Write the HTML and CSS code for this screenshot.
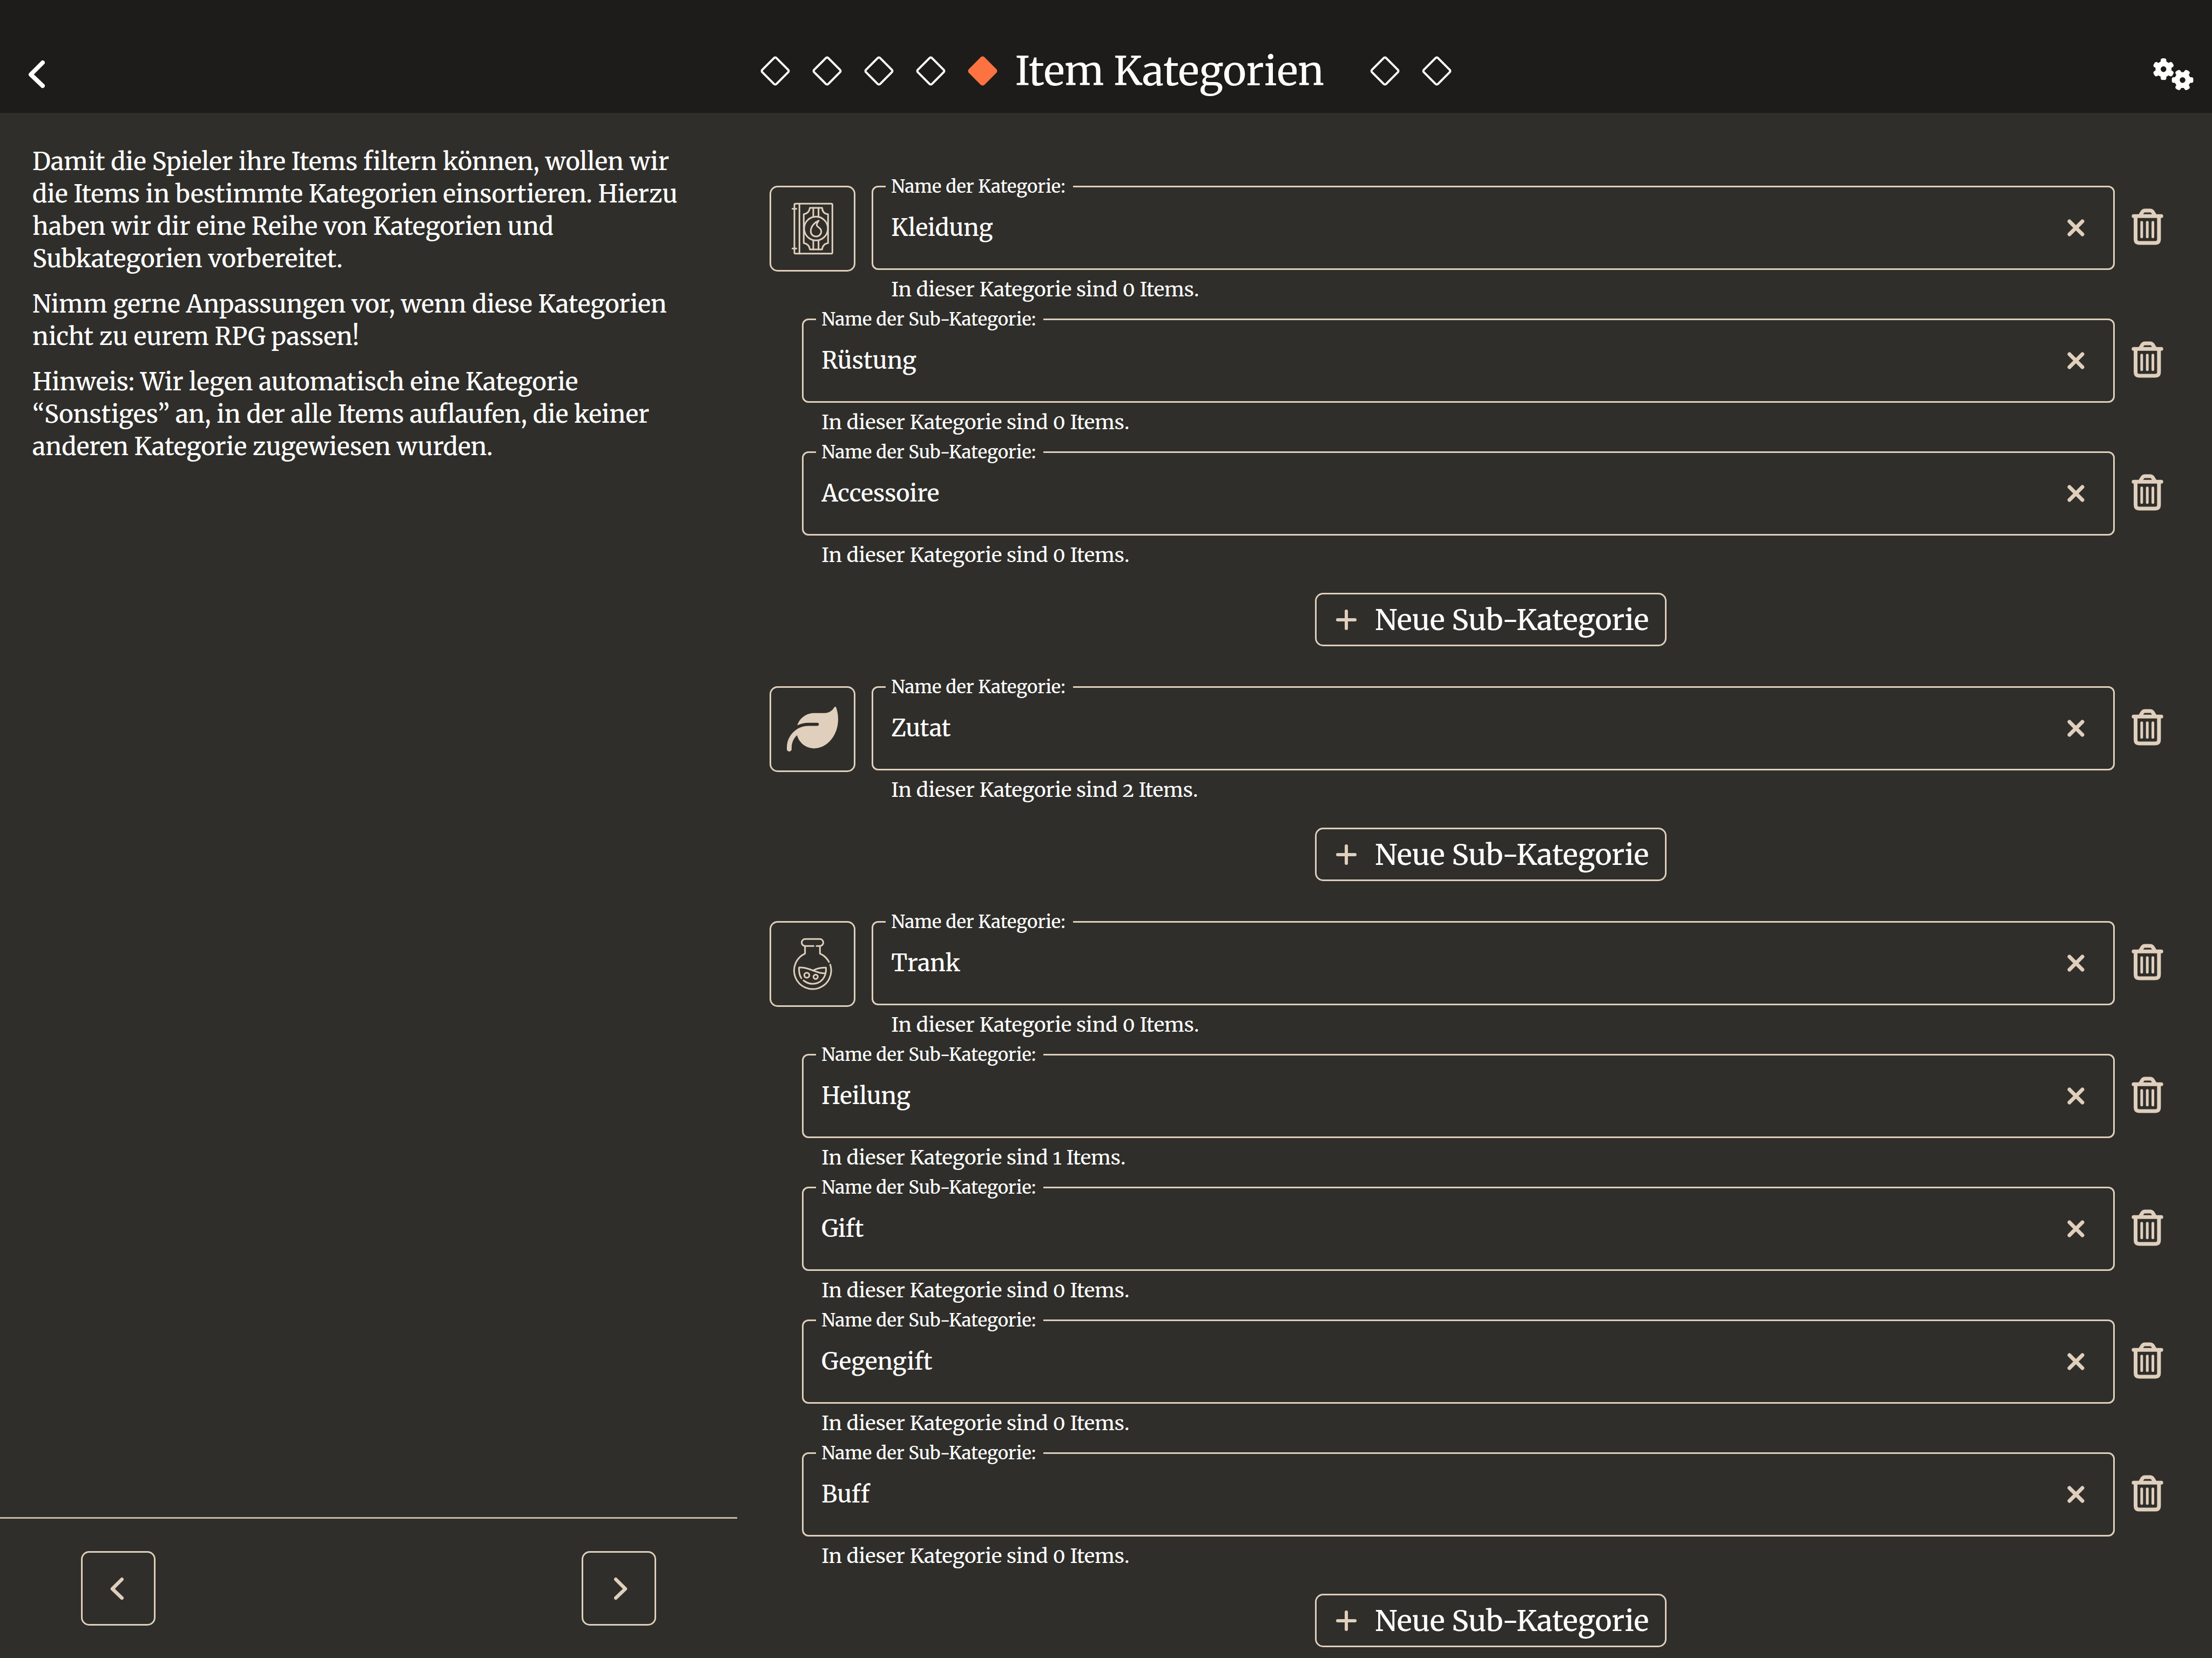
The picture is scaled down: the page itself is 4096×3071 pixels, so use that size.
FILE: index.html
```html
<!DOCTYPE html>
<html lang="de">
<head>
<meta charset="utf-8">
<title>Item Kategorien</title>
<meta name="viewport" content="width=device-width, initial-scale=1">
<link rel="stylesheet" href="styles.css">
</head>
<body>
<svg class="sprite" aria-hidden="true">
  <symbol id="trash" viewBox="0 0 176 204">
    <g fill="none" stroke="currentColor" stroke-linecap="round" stroke-linejoin="round">
      <path stroke-width="21" d="M11 43H165M47 40L60 19Q65 12 74 12H103Q112 12 117 19L130 40M22 43V172Q22 192 42 192H132Q152 192 152 172V43"/>
      <path stroke-width="15" d="M56 77V158M87 77V158M118 77V158"/>
    </g>
  </symbol>
  <symbol id="cross" viewBox="0 0 96 96">
    <path fill="none" stroke="currentColor" stroke-width="21" stroke-linecap="round" d="M12 12L84 84M84 12L12 84"/>
  </symbol>
  <symbol id="plus" viewBox="0 0 38 38">
    <path fill="none" stroke="currentColor" stroke-width="6" stroke-linecap="round" d="M19 3V35M3 19H35"/>
  </symbol>
  <symbol id="left" viewBox="0 0 31 53">
    <path fill="none" stroke="currentColor" stroke-width="8" stroke-linecap="round" stroke-linejoin="round" d="M27 5L5 27L27 48"/>
  </symbol>
  <symbol id="right" viewBox="0 0 31 53">
    <path fill="none" stroke="currentColor" stroke-width="8" stroke-linecap="round" stroke-linejoin="round" d="M4 5L26 27L4 48"/>
  </symbol>
  <symbol id="gear" viewBox="-61 -61 122 122">
    <g fill="currentColor">
      <circle r="45"/>
      <rect x="-16" y="-61" width="32" height="122" rx="12"/>
      <rect x="-16" y="-61" width="32" height="122" rx="12" transform="rotate(60)"/>
      <rect x="-16" y="-61" width="32" height="122" rx="12" transform="rotate(120)"/>
    </g>
    <circle r="16" fill="#1d1c1a"/>
  </symbol>
</svg>

<header class="topbar">
  <button class="bare back" aria-label="Zurück"><svg width="31" height="53"><use href="#left"/></svg></button>
  <div class="stepper">
    <span class="step"><i></i></span><span class="step"><i></i></span><span class="step"><i></i></span><span class="step"><i></i></span><span class="step active"><i></i></span>
    <h1>Item Kategorien</h1>
    <span class="step"><i></i></span><span class="step"><i></i></span>
  </div>
  <button class="bare settings" aria-label="Einstellungen">
    <svg width="75" height="60" viewBox="0 0 225 182"><use href="#gear" x="-4" y="0" width="122" height="122"/><g transform="translate(164 122) rotate(90)"><use href="#gear" x="-61" y="-61" width="122" height="122"/></g></svg>
  </button>
</header>

<div class="layout">
  <aside class="guide">
    <div class="guide-text">
      <p>Damit die Spieler ihre Items filtern können, wollen wir die Items in bestimmte Kategorien einsortieren. Hierzu haben wir dir eine Reihe von Kategorien und Subkategorien vorbereitet.</p>
      <p>Nimm gerne Anpassungen vor, wenn diese Kategorien nicht zu eurem RPG passen!</p>
      <p>Hinweis: Wir legen automatisch eine Kategorie “Sonstiges” an, in der alle Items auflaufen, die keiner anderen Kategorie zugewiesen wurden.</p>
    </div>
    <nav class="guide-nav">
      <button class="box previous" aria-label="Vorheriger Schritt"><svg width="25" height="43"><use href="#left"/></svg></button>
      <button class="box next" aria-label="Nächster Schritt"><svg width="25" height="43"><use href="#right"/></svg></button>
    </nav>
  </aside>

  <main class="categories">
    <section class="group">
      <div class="row">
        <button class="symbol" aria-label="Symbol wählen">
          <svg viewBox="57 51 459 459" fill="none" stroke="currentColor" stroke-width="9" stroke-linecap="round" stroke-linejoin="round">
            <rect x="186" y="142" width="211" height="277" rx="6"/>
            <path d="M214 142V419M175 170H197M175 391H197"/>
            <path d="M272 165H340Q343 198 373 200V361Q343 366 340 396H272Q268 366 238 361V200Q268 196 272 165Z"/>
            <path d="M291 165V213M320 165V213M291 347V396M320 347V396"/>
            <circle cx="306" cy="280" r="66"/>
            <path d="M321 236C298 246 277 268 277 295C277 313 290 324 306 324C323 324 335 312 335 296C335 272 309 276 310 257C311 249 316 244 321 236Z"/>
          </svg>
        </button>
        <div class="entry">
          <fieldset class="field"><legend><label for="c1">Name der Kategorie:</label></legend><input id="c1" type="text" value="Kleidung"><button class="bare clear" aria-label="Leeren"><svg width="32" height="32"><use href="#cross"/></svg></button></fieldset>
          <p class="hint">In dieser Kategorie sind 0 Items.</p>
        </div>
        <button class="bare delete" aria-label="Löschen"><svg width="59" height="68"><use href="#trash"/></svg></button>
      </div>
      <div class="row sub">
        <div class="entry">
          <fieldset class="field"><legend><label for="c2">Name der Sub-Kategorie:</label></legend><input id="c2" type="text" value="Rüstung"><button class="bare clear" aria-label="Leeren"><svg width="32" height="32"><use href="#cross"/></svg></button></fieldset>
          <p class="hint">In dieser Kategorie sind 0 Items.</p>
        </div>
        <button class="bare delete" aria-label="Löschen"><svg width="59" height="68"><use href="#trash"/></svg></button>
      </div>
      <div class="row sub">
        <div class="entry">
          <fieldset class="field"><legend><label for="c3">Name der Sub-Kategorie:</label></legend><input id="c3" type="text" value="Accessoire"><button class="bare clear" aria-label="Leeren"><svg width="32" height="32"><use href="#cross"/></svg></button></fieldset>
          <p class="hint">In dieser Kategorie sind 0 Items.</p>
        </div>
        <button class="bare delete" aria-label="Löschen"><svg width="59" height="68"><use href="#trash"/></svg></button>
      </div>
      <div class="add-row"><button class="add"><svg width="38" height="38"><use href="#plus"/></svg>Neue Sub-Kategorie</button></div>
    </section>

    <section class="group">
      <div class="row">
        <button class="symbol" aria-label="Symbol wählen">
          <svg class="leaf" viewBox="0 0 512 512" fill="currentColor"><path d="M272 96c-78.600 0-145.100 51.500-167.700 122.500c33.600-17 71.500-26.500 111.700-26.500h88c8.800 0 16 7.200 16 16s-7.200 16-16 16H216c-16.600 0-32.700 1.900-48.300 5.400c-25.900 5.900-49.900 16.400-71.400 30.700C38.300 298.800 0 364.900 0 440v16c0 13.300 10.700 24 24 24s24-10.700 24-24V440c0-48.700 20.700-92.500 53.800-123.200C121.600 392.300 190.300 448 272 448l1 0c132.100-.7 239-130.900 239-291.400c0-42.600-7.500-83.100-21.100-119.600c-2.600-6.900-12.700-6.600-16.200-.1C455.900 72.100 418.700 96 376 96L272 96z"/></svg>
        </button>
        <div class="entry">
          <fieldset class="field"><legend><label for="c4">Name der Kategorie:</label></legend><input id="c4" type="text" value="Zutat"><button class="bare clear" aria-label="Leeren"><svg width="32" height="32"><use href="#cross"/></svg></button></fieldset>
          <p class="hint">In dieser Kategorie sind 2 Items.</p>
        </div>
        <button class="bare delete" aria-label="Löschen"><svg width="59" height="68"><use href="#trash"/></svg></button>
      </div>
      <div class="add-row"><button class="add"><svg width="38" height="38"><use href="#plus"/></svg>Neue Sub-Kategorie</button></div>
    </section>

    <section class="group">
      <div class="row">
        <button class="symbol" aria-label="Symbol wählen">
          <svg viewBox="57 57 459 459" fill="none" stroke="currentColor" stroke-width="9" stroke-linecap="round" stroke-linejoin="round">
            <path d="M293 187H246A19 19 0 0 1 246 148H327A19 19 0 0 1 327 187H309"/>
            <path d="M245 190V229A103 103 0 1 0 385 290M328 190V229Q360 242 378 275"/>
            <path d="M225 366Q210 345 212 306C245 304 275 317 290 323C310 331 335 341 358 338M290 323Q320 306 361 307Q365 345 342 373Q320 397 287 397Q258 396 237 378"/>
            <circle cx="255" cy="349" r="14"/>
            <circle cx="304" cy="358" r="12"/>
          </svg>
        </button>
        <div class="entry">
          <fieldset class="field"><legend><label for="c5">Name der Kategorie:</label></legend><input id="c5" type="text" value="Trank"><button class="bare clear" aria-label="Leeren"><svg width="32" height="32"><use href="#cross"/></svg></button></fieldset>
          <p class="hint">In dieser Kategorie sind 0 Items.</p>
        </div>
        <button class="bare delete" aria-label="Löschen"><svg width="59" height="68"><use href="#trash"/></svg></button>
      </div>
      <div class="row sub">
        <div class="entry">
          <fieldset class="field"><legend><label for="c6">Name der Sub-Kategorie:</label></legend><input id="c6" type="text" value="Heilung"><button class="bare clear" aria-label="Leeren"><svg width="32" height="32"><use href="#cross"/></svg></button></fieldset>
          <p class="hint">In dieser Kategorie sind 1 Items.</p>
        </div>
        <button class="bare delete" aria-label="Löschen"><svg width="59" height="68"><use href="#trash"/></svg></button>
      </div>
      <div class="row sub">
        <div class="entry">
          <fieldset class="field"><legend><label for="c7">Name der Sub-Kategorie:</label></legend><input id="c7" type="text" value="Gift"><button class="bare clear" aria-label="Leeren"><svg width="32" height="32"><use href="#cross"/></svg></button></fieldset>
          <p class="hint">In dieser Kategorie sind 0 Items.</p>
        </div>
        <button class="bare delete" aria-label="Löschen"><svg width="59" height="68"><use href="#trash"/></svg></button>
      </div>
      <div class="row sub">
        <div class="entry">
          <fieldset class="field"><legend><label for="c8">Name der Sub-Kategorie:</label></legend><input id="c8" type="text" value="Gegengift"><button class="bare clear" aria-label="Leeren"><svg width="32" height="32"><use href="#cross"/></svg></button></fieldset>
          <p class="hint">In dieser Kategorie sind 0 Items.</p>
        </div>
        <button class="bare delete" aria-label="Löschen"><svg width="59" height="68"><use href="#trash"/></svg></button>
      </div>
      <div class="row sub">
        <div class="entry">
          <fieldset class="field"><legend><label for="c9">Name der Sub-Kategorie:</label></legend><input id="c9" type="text" value="Buff"><button class="bare clear" aria-label="Leeren"><svg width="32" height="32"><use href="#cross"/></svg></button></fieldset>
          <p class="hint">In dieser Kategorie sind 0 Items.</p>
        </div>
        <button class="bare delete" aria-label="Löschen"><svg width="59" height="68"><use href="#trash"/></svg></button>
      </div>
      <div class="add-row"><button class="add"><svg width="38" height="38"><use href="#plus"/></svg>Neue Sub-Kategorie</button></div>
    </section>
  </main>
</div>
</body>
</html>
```
FILE: styles.css
```css
:root {
  --bar: #1d1c1a;
  --page: #2f2e2a;
  --sand: #dfcfbc;
  --divider: #c5b9a7;
  --accent: #fc7341;
}

* {
  box-sizing: border-box;
}

body {
  margin: 0;
  min-height: 100vh;
  display: flex;
  flex-direction: column;
  background: var(--page);
  color: #fff;
  font-family: "Merriweather", "DejaVu Serif", serif;
  font-variant-numeric: oldstyle-nums;
  font-size: 45px;
  font-weight: 500;
  line-height: 60px;
}

p,
h1 {
  margin: 0;
}

svg {
  display: block;
}

button,
input {
  margin: 0;
  font: inherit;
  color: inherit;
}

button {
  display: flex;
  align-items: center;
  justify-content: center;
  padding: 0;
  background: none;
  border: 3px solid var(--sand);
  border-radius: 15px;
  color: var(--sand);
}

.sprite {
  position: absolute;
  width: 0;
  height: 0;
}

.bare {
  border: 0;
}

/* Top bar */
.topbar {
  display: grid;
  grid-template-columns: 1fr auto 1fr;
  align-items: center;
  height: 209px;
  padding: 54px 34px 0;
  background: var(--bar);
}

.topbar .bare {
  padding-top: 12px;
  color: #fff;
}

.back {
  justify-self: start;
  margin-left: 18px;
}

.settings {
  justify-self: end;
}

.stepper {
  display: flex;
  align-items: center;
}

.stepper h1 {
  margin: 0 64px 0 12px;
  font-size: 74px;
  font-weight: 400;
  line-height: 84px;
}

.step {
  display: grid;
  place-items: center;
  width: 96px;
}

.step i {
  width: 41px;
  height: 41px;
  border: 4px solid #fff;
  border-radius: 5px;
  transform: rotate(45deg);
}

.step.active i {
  border-color: var(--accent);
  background: var(--accent);
}

/* Columns */
.layout {
  flex: 1;
  display: grid;
  grid-template-columns: 1fr 2fr;
}

.guide {
  display: flex;
  flex-direction: column;
  justify-content: space-between;
}

.guide-text {
  display: grid;
  gap: 24px;
  padding: 60px;
}

.guide-nav {
  display: flex;
  justify-content: space-between;
  padding: 60px 150px;
  border-top: 3px solid var(--divider);
}

.box {
  width: 138px;
  height: 138px;
}

.previous {
  padding-right: 6px;
}

.next {
  padding-left: 6px;
}

.categories {
  display: grid;
  align-content: start;
  gap: 74px;
  min-width: 0;
  padding: 135px 60px 20px;
}

/* Category rows */
.row {
  display: flex;
  align-items: flex-start;
}

.sub,
.add-row {
  margin-left: 60px;
}

.symbol {
  flex: none;
  width: 159px;
  height: 159px;
  margin-right: 30px;
}

.symbol svg {
  width: 153px;
  height: 153px;
}

.symbol .leaf {
  width: 95px;
  height: 95px;
}

.entry {
  flex: 1;
  min-width: 0;
}

.field {
  display: flex;
  align-items: center;
  height: 156px;
  margin: 0;
  padding: 0 53px 0 33px;
  border: 3px solid var(--sand);
  border-radius: 12px;
}

.field legend {
  height: 3px;
  margin-left: -10px;
  padding: 0 14px 0 10px;
  font-size: 33px;
  line-height: 3px;
}

.field input {
  flex: 1;
  min-width: 0;
  height: 148px;
  padding: 0;
  background: none;
  border: 0;
  outline: 0;
  font-size: 43px;
}

.hint {
  margin: 16px 0 34px;
  padding-left: 36px;
  font-size: 37px;
  font-weight: 400;
  line-height: 40px;
}

.delete {
  flex: none;
  width: 120px;
  height: 152px;
}

.add-row {
  display: flex;
  justify-content: center;
  padding-top: 16px;
}

.add {
  gap: 34px;
  height: 99px;
  padding: 0 30px 0 36px;
  font-size: 53px;
  color: #fff;
}

.add svg {
  color: var(--sand);
}
```
